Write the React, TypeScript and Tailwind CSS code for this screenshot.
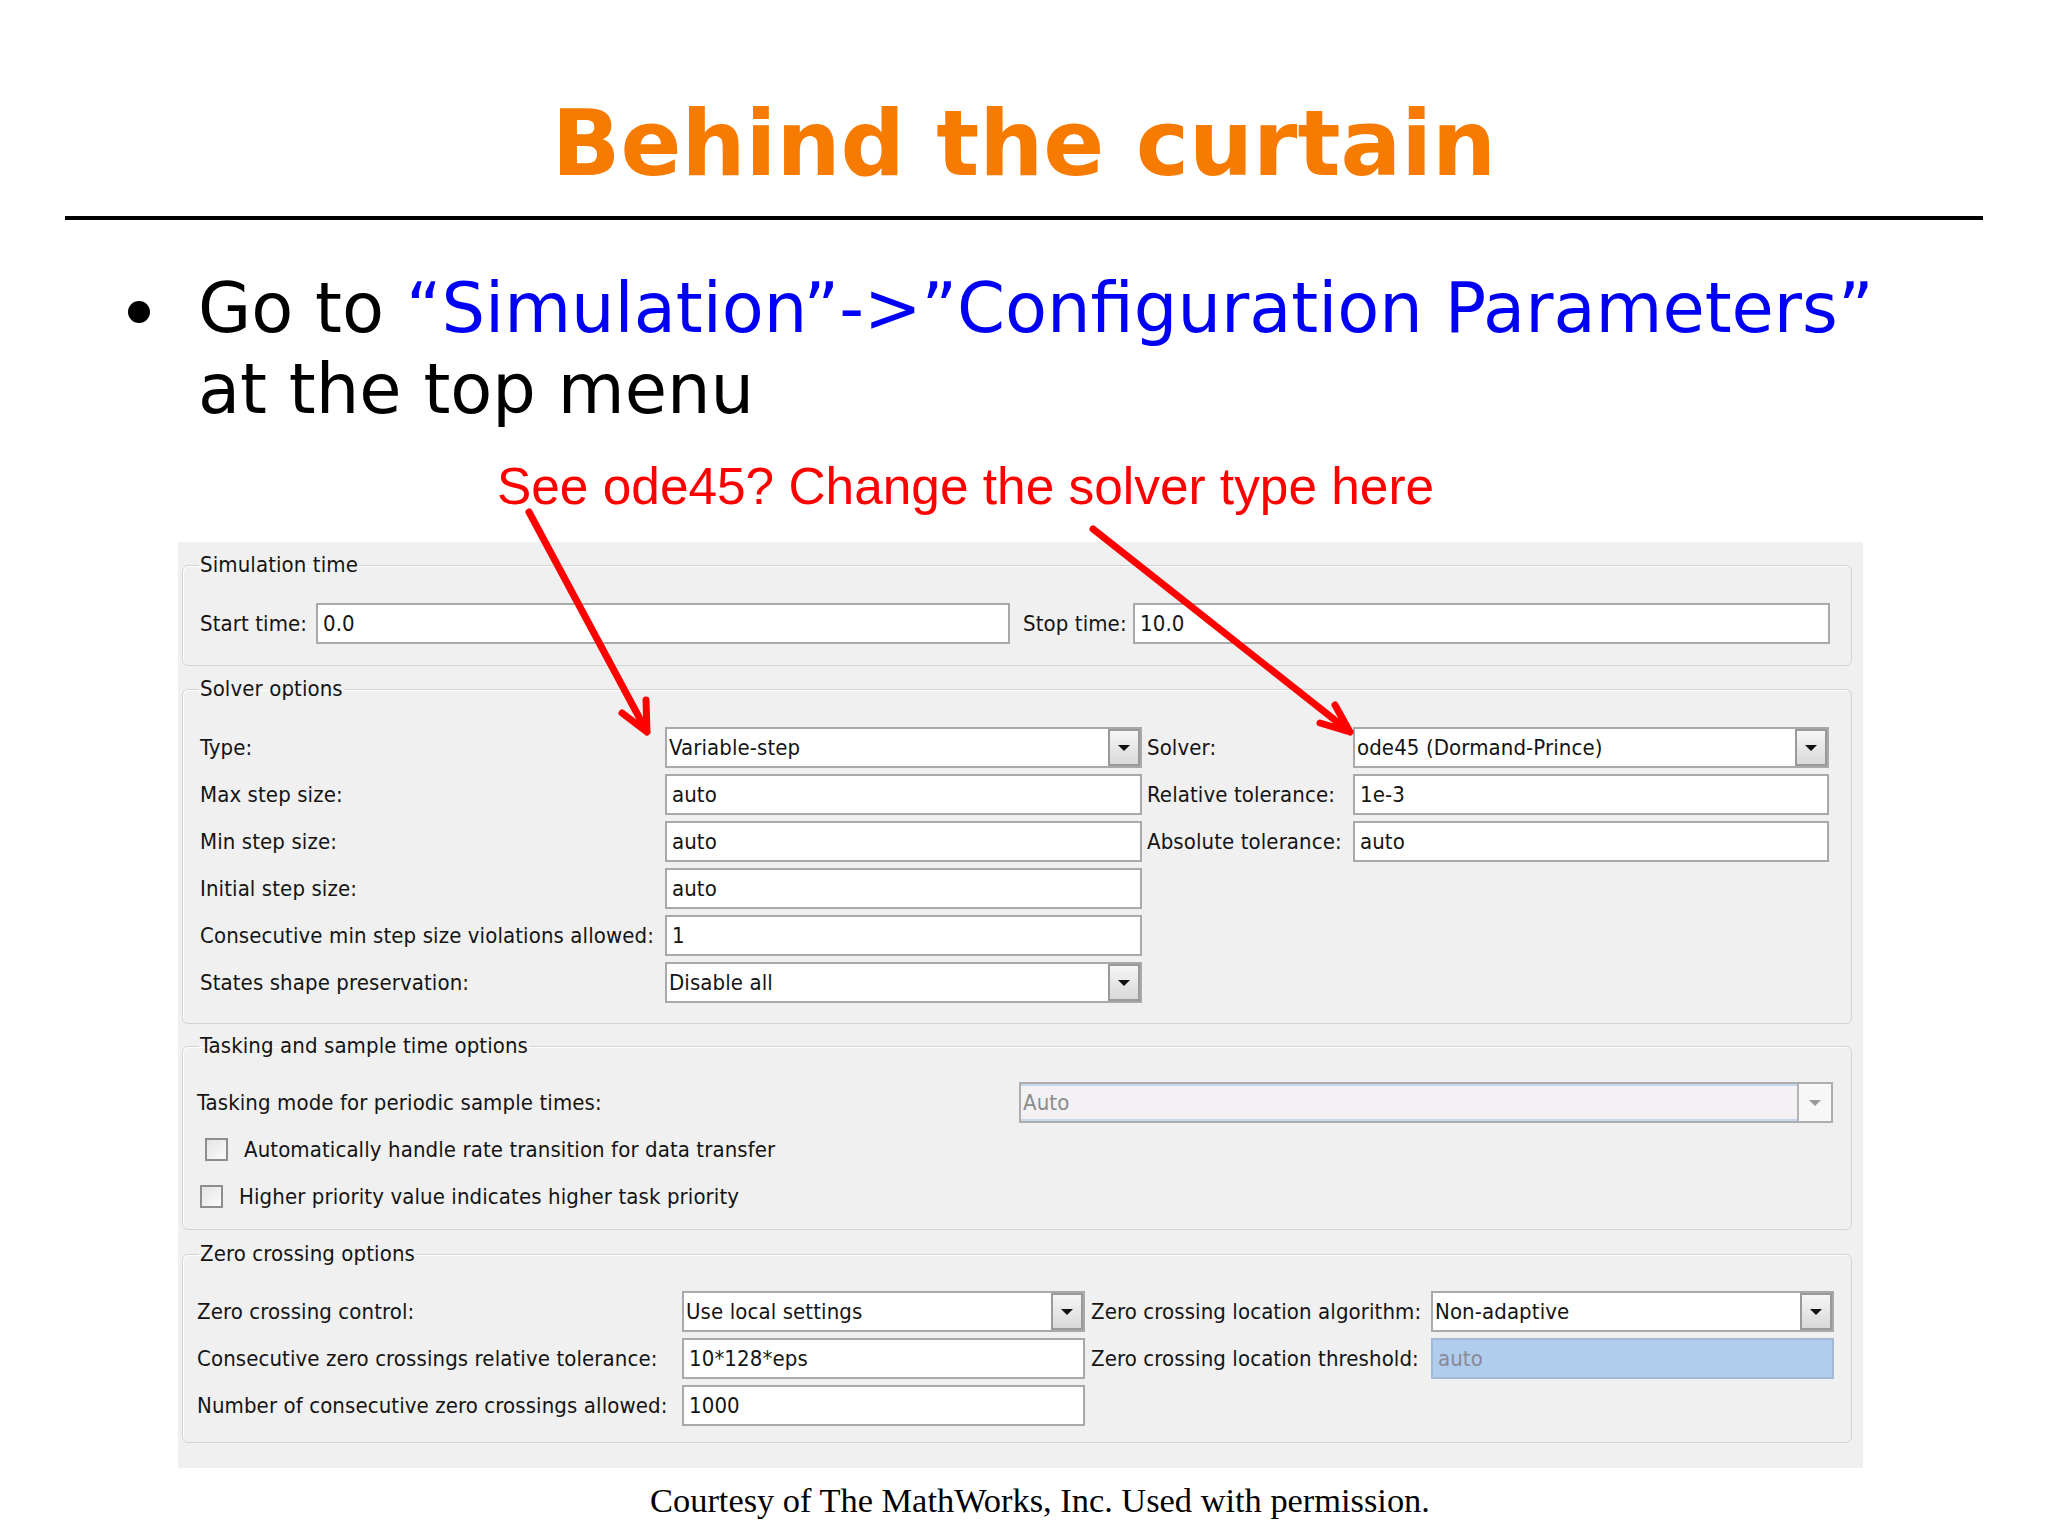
import React from "react";

// Slide: "Behind the curtain" with a Simulink configuration dialog screenshot

const ui = "font-['DejaVu_Sans_Condensed','DejaVu_Sans',sans-serif] text-[22px] tracking-[0.1px] text-[#141414]";

function Arrow() {
  return (
    <svg width="14" height="8" viewBox="0 0 14 8">
      <path d="M1 1 L13 1 L7 7 Z" fill="#111" />
    </svg>
  );
}

function TextBox({ w, value, blue }: { w: string; value: string; blue?: boolean }) {
  return (
    <div
      className={`${w} h-[41px] border-2 flex items-center pl-[5px] ${
        blue ? "border-[#a2b8d4] bg-[#b1cdee] text-[#8a8a96]" : "border-[#a9a9a9] bg-white"
      }`}
    >
      {value}
    </div>
  );
}

function Dropdown({ w, value }: { w: string; value: string }) {
  return (
    <div className={`${w} h-[41px] border-2 border-[#a9a9a9] bg-white flex items-stretch`}>
      <span className="flex-1 flex items-center pl-[2px]">{value}</span>
      <span className="w-[32px] border-2 border-[#9a9a9a] bg-gradient-to-b from-[#f6f6f6] to-[#d9d9d9] flex items-center justify-center">
        <Arrow />
      </span>
    </div>
  );
}

function Group({ title, children, cls }: { title: string; children: React.ReactNode; cls: string }) {
  return (
    <fieldset className="border border-[#d3d3d3] rounded-[6px] shadow-[inset_1px_1px_0_#ffffff]">
      <legend className="ml-[16px] px-[1px] leading-[24px]">{title}</legend>
      <div className={cls}>{children}</div>
    </fieldset>
  );
}

function Checkbox({ label, ml, gap }: { label: string; ml: string; gap: string }) {
  return (
    <div className={`h-[41px] flex items-center ${ml} ${gap}`}>
      <span className="w-[23px] h-[23px] border-2 border-[#8e8e8e] bg-gradient-to-br from-[#e4e4e4] to-[#fbfbfb]" />
      <span>{label}</span>
    </div>
  );
}

function ConfigDialog() {
  return (
    <div className={`ml-[178px] mt-[26px] w-[1685px] h-[926px] bg-[#f0f0f0] pt-[11px] pl-[4px] pr-[11px] flex flex-col ${ui}`}>
      <Group title="Simulation time" cls="pl-[17px] pt-[26px] pb-[21px] flex items-center">
        <span className="w-[116px]">Start time:</span>
        <TextBox w="w-[694px]" value="0.0" />
        <span className="ml-[13px] w-[110px]">Stop time:</span>
        <TextBox w="w-[697px]" value="10.0" />
      </Group>

      <div className="mt-[11px]">
        <Group title="Solver options" cls="pl-[17px] pt-[26px] pb-[20px] flex flex-col gap-[6px]">
          <div className="flex items-center">
            <span className="w-[465px]">Type:</span>
            <Dropdown w="w-[477px]" value="Variable-step" />
            <span className="ml-[5px] w-[206px]">Solver:</span>
            <Dropdown w="w-[476px]" value="ode45 (Dormand-Prince)" />
          </div>
          <div className="flex items-center">
            <span className="w-[465px]">Max step size:</span>
            <TextBox w="w-[477px]" value="auto" />
            <span className="ml-[5px] w-[206px]">Relative tolerance:</span>
            <TextBox w="w-[476px]" value="1e-3" />
          </div>
          <div className="flex items-center">
            <span className="w-[465px]">Min step size:</span>
            <TextBox w="w-[477px]" value="auto" />
            <span className="ml-[5px] w-[206px]">Absolute tolerance:</span>
            <TextBox w="w-[476px]" value="auto" />
          </div>
          <div className="flex items-center">
            <span className="w-[465px]">Initial step size:</span>
            <TextBox w="w-[477px]" value="auto" />
          </div>
          <div className="flex items-center">
            <span className="w-[465px]">Consecutive min step size violations allowed:</span>
            <TextBox w="w-[477px]" value="1" />
          </div>
          <div className="flex items-center">
            <span className="w-[465px]">States shape preservation:</span>
            <Dropdown w="w-[477px]" value="Disable all" />
          </div>
        </Group>
      </div>

      <div className="mt-[10px]">
        <Group title="Tasking and sample time options" cls="pl-[14px] pr-[18px] pt-[24px] pb-[12px] flex flex-col gap-[6px]">
          <div className="flex items-center">
            <span className="flex-1">Tasking mode for periodic sample times:</span>
            <div className="w-[814px] h-[41px] border-2 border-[#adadad] bg-[#f3f1f3] flex items-stretch">
              <span className="flex-1 flex items-center pl-[2px] text-[#8c8c8c] border-y-2 border-[#c6d8ee]">Auto</span>
              <span className="w-[34px] border-l-2 border-[#b4b4b4] bg-[#f7f7f7] flex items-center justify-center">
                <svg width="14" height="8" viewBox="0 0 14 8">
                  <path d="M1 1 L13 1 L7 7 Z" fill="#9a9a9a" />
                </svg>
              </span>
            </div>
          </div>
          <Checkbox label="Automatically handle rate transition for data transfer" ml="ml-[8px]" gap="gap-[16px]" />
          <Checkbox label="Higher priority value indicates higher task priority" ml="ml-[3px]" gap="gap-[16px]" />
        </Group>
      </div>

      <div className="mt-[12px]">
        <Group title="Zero crossing options" cls="pl-[14px] pt-[25px] pb-[16px] flex flex-col gap-[6px]">
          <div className="flex items-center">
            <span className="w-[485px]">Zero crossing control:</span>
            <Dropdown w="w-[403px]" value="Use local settings" />
            <span className="ml-[6px] w-[340px]">Zero crossing location algorithm:</span>
            <Dropdown w="w-[403px]" value="Non-adaptive" />
          </div>
          <div className="flex items-center">
            <span className="w-[485px]">Consecutive zero crossings relative tolerance:</span>
            <TextBox w="w-[403px]" value="10*128*eps" />
            <span className="ml-[6px] w-[340px]">Zero crossing location threshold:</span>
            <TextBox w="w-[403px]" value="auto" blue />
          </div>
          <div className="flex items-center">
            <span className="w-[485px]">Number of consecutive zero crossings allowed:</span>
            <TextBox w="w-[403px]" value="1000" />
          </div>
        </Group>
      </div>
    </div>
  );
}

export default function App() {
  return (
    <div className="relative w-[2048px] h-[1534px] bg-white overflow-hidden">
      <h1 className="pt-[94px] text-center text-[90px] leading-[100px] font-bold text-[#f67b00] font-['DejaVu_Sans',sans-serif]">
        Behind the curtain
      </h1>
      <div className="mx-[65px] mt-[22px] h-[4px] bg-black" />

      <div className="mt-[48px] pl-[128px] flex items-start font-['DejaVu_Sans',sans-serif] text-[68.7px] leading-[81px] text-black">
        <span className="mt-[33px] w-[22px] h-[22px] rounded-full bg-black shrink-0" />
        <p className="ml-[48px] whitespace-nowrap">
          Go to <span className="text-[#0000f5]">“Simulation”-&gt;”Configuration Parameters”</span>
          <br />
          at the top menu
        </p>
      </div>

      <p className="mt-[26px] pl-[497px] font-['Liberation_Sans',Arial,sans-serif] text-[51.4px] leading-[60px] text-[#ff0000] whitespace-nowrap">
        See ode45? Change the solver type here
      </p>

      <ConfigDialog />

      <p className="mt-[12px] pl-[32px] text-center font-['Liberation_Serif','Times_New_Roman',serif] text-[34.4px] leading-[40px] text-black">
        Courtesy of The MathWorks, Inc. Used with permission.
      </p>

      <svg className="absolute inset-0 pointer-events-none" width="2048" height="1534">
        <g stroke="#ff0000" strokeWidth="7" strokeLinecap="round" strokeLinejoin="round" fill="none">
          <path d="M529 512 L647 732 M622 713 L647 732 L646 700" />
          <path d="M1093 529 L1350 732 M1320 723 L1350 732 L1335 705" />
        </g>
      </svg>
    </div>
  );
}
